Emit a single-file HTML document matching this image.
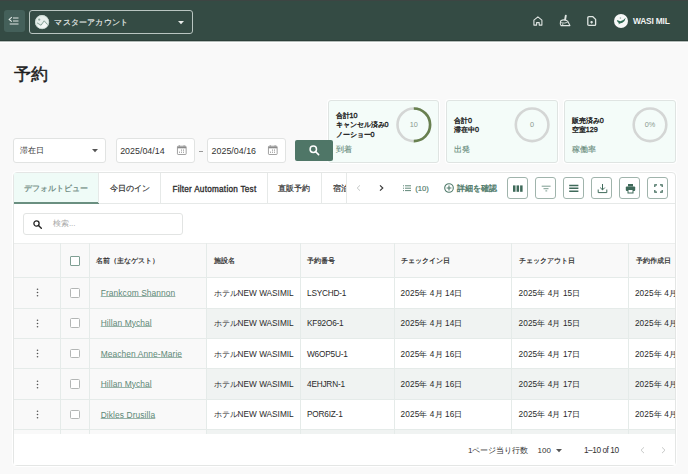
<!DOCTYPE html><html lang="ja"><head><meta charset="utf-8"><style>
*{box-sizing:border-box;margin:0;padding:0}
html,body{width:688px;height:474px;overflow:hidden}
body{background:#f9f9f9;font-family:"Liberation Sans",sans-serif;color:#222;position:relative}
.a{position:absolute;white-space:nowrap}
svg{position:absolute;overflow:visible}
</style></head><body>
<div class="a" style="left:0;top:0;width:688px;height:41px;background:#344b44"></div>
<div class="a" style="left:0;top:0;width:688px;height:1px;background:#3d4543"></div>
<div class="a" style="left:0;top:40px;width:688px;height:1px;background:#2c3f39"></div>
<div class="a" style="left:0;top:41px;width:688px;height:1px;background:#b4bcb9"></div>
<div class="a" style="left:0;top:42px;width:688px;height:1px;background:#ffffff"></div>
<div class="a" style="left:3.5px;top:10px;width:21.3px;height:21.8px;border-radius:3px;background:#44605a"></div>
<svg style="left:8px;top:15px" width="12" height="11" viewBox="0 0 12 11"><path d="M3.8 2.1 L1.2 4.4 L3.8 6.7" fill="none" stroke="#e4eae7" stroke-width="1.1"/><path d="M5 3H10.5 M5 6H10.5 M1.7 9H10.5" stroke="#dfe6e3" stroke-width="1.2"/></svg>
<div class="a" style="left:29px;top:10px;width:164px;height:24px;border:1px solid #b9c5c1;border-radius:3px"></div>
<div class="a" style="left:34.5px;top:14.7px;width:14.3px;height:14.3px;border-radius:50%;background:#e6eeeb"></div>
<svg style="left:34.5px;top:14.7px" width="14.3" height="14.3" viewBox="0 0 14.3 14.3"><circle cx="7.15" cy="7.15" r="6.6" fill="none" stroke="#c3d4cd" stroke-width="0.8"/><circle cx="4.2" cy="4.6" r="1.1" fill="#8fa99e"/><path d="M2 7.8 L6 10.2 L9.2 5.8 L12.6 9.6" fill="none" stroke="#7d9a8f" stroke-width="0.9"/><path d="M2.5 9.8 L6 11.8 L9.2 7.6 L12 10.5 L11 12.5 H3.5Z" fill="#f4f7f6"/></svg>
<div class="a" style="left:54.4px;top:16px;font-size:8px;letter-spacing:0.2px;line-height:14px;color:#eaeeec;-webkit-text-stroke:0.15px #eaeeec">マスターアカウント</div>
<svg style="left:178.3px;top:20.5px" width="6" height="4" viewBox="0 0 6 4"><path d="M0 0H6L3 3.2Z" fill="#e8ecea"/></svg>
<svg style="left:532.6px;top:15.5px" width="10" height="10" viewBox="0 0 10 10"><path d="M0.9 4.2 L4.9 0.9 L8.9 4.2 V9.1 H6.2 V6.6 H3.6 V9.1 H0.9 Z" fill="none" stroke="#dfe5e2" stroke-width="1.1" stroke-linejoin="round"/></svg>
<svg style="left:559px;top:14px" width="13" height="13" viewBox="0 0 13 13"><path d="M6.8 1.6 L6.1 5.6" stroke="#dfe5e2" stroke-width="1.9" stroke-linecap="round"/><path d="M1.6 7 C1.1 8.8 1.3 10.5 2.1 11.6 H10.9 L8.6 7.1 C6.6 5.9 3.3 5.8 1.6 7 Z" fill="none" stroke="#dfe5e2" stroke-width="1.1" stroke-linejoin="round"/><path d="M2.2 8.6 C4.5 9.4 6.5 9.2 8.8 8 M3.3 9.5 L4.2 11.5" fill="none" stroke="#dfe5e2" stroke-width="0.9"/></svg>
<svg style="left:587px;top:15.8px" width="10" height="10" viewBox="0 0 10 10"><path d="M0.8 1.8 Q0.8 0.7 1.9 0.7 H5.9 L8.6 3.4 V8.4 Q8.6 9.3 7.7 9.3 H1.9 Q0.8 9.3 0.8 8.4 Z" fill="none" stroke="#dfe5e2" stroke-width="1.3" stroke-linejoin="round"/><path d="M4.6 4.9 V7.5 M3.3 6.2 H5.9" stroke="#dfe5e2" stroke-width="1.2"/></svg>
<div class="a" style="left:613.9px;top:13.7px;width:14.2px;height:14.2px;border-radius:50%;background:#f7f8f8"></div>
<svg style="left:613.9px;top:13.7px" width="14.2" height="14.2" viewBox="0 0 14.2 14.2"><path d="M2.8 5.9 L6.4 7.2 Q9.5 6.6 11.7 3.7 Q11.1 7.3 8.4 8.8 L5.8 9.4 L4.7 10.6 L4.8 8.9 Q3.2 7.9 2.8 5.9Z" fill="#2f6b55"/><circle cx="6.4" cy="4.1" r="0.8" fill="#9db3aa"/></svg>
<div class="a" style="left:633px;top:15px;font-size:8.4px;letter-spacing:-0.2px;line-height:12px;font-weight:bold;color:#f2f4f3">WASI MIL</div>
<div class="a" style="left:13.5px;top:63px;font-size:17px;line-height:24px;color:#1e1e1e;-webkit-text-stroke:0.5px #1e1e1e">予約</div>
<div class="a" style="left:13px;top:137.8px;width:93.4px;height:25.099999999999994px;background:#fff;border:1px solid #e1e3e2;border-radius:3px;"></div>
<div class="a" style="left:19.7px;top:144px;font-size:8px;line-height:13px;color:#333">滞在日</div>
<svg style="left:92px;top:148.5px" width="6" height="4" viewBox="0 0 6 4"><path d="M0 0H6L3 3.2Z" fill="#555"/></svg>
<div class="a" style="left:115.5px;top:138px;width:79.30000000000001px;height:24.599999999999994px;background:#fff;border:1px solid #e1e3e2;border-radius:3px;"></div>
<div class="a" style="left:120.2px;top:144.5px;font-size:8.9px;line-height:13px;color:#333">2025/04/14</div>
<svg style="left:177px;top:145.3px" width="10" height="10" viewBox="0 0 10 10"><rect x="0.45" y="1.2" width="8.7" height="8.3" rx="0.7" fill="none" stroke="#8a8a8a" stroke-width="0.8"/><path d="M0.5 2.5H9.1" stroke="#8a8a8a" stroke-width="1.6"/><path d="M2.3 0.2V1.6 M7.1 0.2V1.6" stroke="#8a8a8a" stroke-width="0.8"/><g fill="#8a8a8a"><rect x="4" y="4.6" width="1" height="1"/><rect x="6" y="4.6" width="1" height="1"/><rect x="2" y="6.7" width="1" height="1"/><rect x="4" y="6.7" width="1" height="1"/><rect x="6" y="6.7" width="1" height="1"/></g></svg>
<div class="a" style="left:198.7px;top:150.5px;width:4.5px;height:1px;background:#999"></div>
<div class="a" style="left:206.5px;top:138px;width:79.39999999999998px;height:24.599999999999994px;background:#fff;border:1px solid #e1e3e2;border-radius:3px;"></div>
<div class="a" style="left:211.6px;top:144.5px;font-size:8.9px;line-height:13px;color:#333">2025/04/16</div>
<svg style="left:268.3px;top:145.3px" width="10" height="10" viewBox="0 0 10 10"><rect x="0.45" y="1.2" width="8.7" height="8.3" rx="0.7" fill="none" stroke="#8a8a8a" stroke-width="0.8"/><path d="M0.5 2.5H9.1" stroke="#8a8a8a" stroke-width="1.6"/><path d="M2.3 0.2V1.6 M7.1 0.2V1.6" stroke="#8a8a8a" stroke-width="0.8"/><g fill="#8a8a8a"><rect x="4" y="4.6" width="1" height="1"/><rect x="6" y="4.6" width="1" height="1"/><rect x="2" y="6.7" width="1" height="1"/><rect x="4" y="6.7" width="1" height="1"/><rect x="6" y="6.7" width="1" height="1"/></g></svg>
<div class="a" style="left:327.8px;top:100px;width:111.2px;height:62.6px;background:#f4fcf9;border:1px solid #dfe4e2;border-radius:3px;box-shadow:0 0 1px 1px #fff"></div>
<div class="a" style="left:335.6px;top:110.9px;font-size:7.2px;line-height:9.4px;color:#1f1f1f;-webkit-text-stroke:0.35px #1f1f1f">合計10<br>キャンセル済み0<br>ノーショー0</div>
<div class="a" style="left:335.6px;top:142.5px;font-size:8.2px;line-height:14px;color:#6c8f81;-webkit-text-stroke:0.15px #6c8f81">到着</div>
<svg style="left:0;top:0" width="688" height="474"><circle cx="413.8" cy="124.8" r="16.3" fill="none" stroke="#d4d6d5" stroke-width="2.6"/><path d="M413.8 108.5 A16.3 16.3 0 0 1 413.8 141.1" fill="none" stroke="#68804f" stroke-width="2.6"/></svg>
<div class="a" style="left:398.8px;top:118.8px;width:30px;text-align:center;font-size:7.3px;line-height:12px;color:#8a9a90">10</div>
<div class="a" style="left:446.1px;top:100px;width:111.8px;height:62.6px;background:#f4fcf9;border:1px solid #dfe4e2;border-radius:3px;box-shadow:0 0 1px 1px #fff"></div>
<div class="a" style="left:453.90000000000003px;top:115.6px;font-size:7.2px;line-height:9.4px;color:#1f1f1f;-webkit-text-stroke:0.35px #1f1f1f">合計0<br>滞在中0</div>
<div class="a" style="left:453.90000000000003px;top:142.5px;font-size:8.2px;line-height:14px;color:#6c8f81;-webkit-text-stroke:0.15px #6c8f81">出発</div>
<svg style="left:0;top:0" width="688" height="474"><circle cx="532.1" cy="124.8" r="16.3" fill="none" stroke="#d4d6d5" stroke-width="2.6"/></svg>
<div class="a" style="left:517.1px;top:118.8px;width:30px;text-align:center;font-size:7.3px;line-height:12px;color:#8a9a90">0</div>
<div class="a" style="left:564.0px;top:100px;width:112px;height:62.6px;background:#f4fcf9;border:1px solid #dfe4e2;border-radius:3px;box-shadow:0 0 1px 1px #fff"></div>
<div class="a" style="left:571.8px;top:115.6px;font-size:7.2px;line-height:9.4px;color:#1f1f1f;-webkit-text-stroke:0.35px #1f1f1f">販売済み0<br>空室129</div>
<div class="a" style="left:571.8px;top:142.5px;font-size:8.2px;line-height:14px;color:#6c8f81;-webkit-text-stroke:0.15px #6c8f81">稼働率</div>
<svg style="left:0;top:0" width="688" height="474"><circle cx="650.0" cy="124.8" r="16.3" fill="none" stroke="#d4d6d5" stroke-width="2.6"/></svg>
<div class="a" style="left:635.0px;top:118.8px;width:30px;text-align:center;font-size:7.3px;line-height:12px;color:#8a9a90">0%</div>
<div class="a" style="left:295.3px;top:140px;width:37.3px;height:20.7px;background:#4f7667;border-radius:2px"></div>
<svg style="left:309px;top:145px" width="11" height="11" viewBox="0 0 11 11"><circle cx="4.3" cy="4.3" r="3.2" fill="none" stroke="#fff" stroke-width="1.5"/><path d="M6.7 6.7 L9.6 9.6" stroke="#fff" stroke-width="1.6" stroke-linecap="round"/></svg>
<div class="a" style="left:13px;top:172px;width:663px;height:294.4px;background:#fff;border:1px solid #e4e6e5;border-radius:4px;box-shadow:0 0 1px 1px #fff"></div>
<div class="a" style="left:14px;top:173px;width:84.8px;height:29px;background:#effbf7"></div>
<div class="a" style="left:14px;top:202px;width:84.8px;height:2px;background:#6a8f80"></div>
<div class="a" style="left:98.8px;top:203px;width:576.2px;height:1px;background:#e6e9e8"></div>
<div class="a" style="left:98.3px;top:173px;width:1px;height:30px;background:#e6e9e8"></div>
<div class="a" style="left:160.1px;top:173px;width:1px;height:30px;background:#e6e9e8"></div>
<div class="a" style="left:266.5px;top:173px;width:1px;height:30px;background:#e6e9e8"></div>
<div class="a" style="left:320.5px;top:173px;width:1px;height:30px;background:#e6e9e8"></div>
<div class="a" style="left:345.8px;top:173px;width:1px;height:30px;background:#e6e9e8"></div>
<div class="a" style="left:13.6px;top:181.7px;width:85.2px;text-align:center;font-size:8px;line-height:14px;color:#6b877c;-webkit-text-stroke:0.2px #6b877c">デフォルトビュー</div>
<div class="a" style="left:98.8px;top:181.7px;width:61.8px;text-align:center;font-size:8px;line-height:14px;color:#333;-webkit-text-stroke:0.2px #333">今日のイン</div>
<div class="a" style="left:172.4px;top:182.5px;font-size:8.2px;letter-spacing:0.25px;line-height:14px;color:#2a2a2a;-webkit-text-stroke:0.3px #2a2a2a">Filter Automation Test</div>
<div class="a" style="left:267px;top:181.7px;width:54px;text-align:center;font-size:8px;line-height:14px;color:#333;-webkit-text-stroke:0.2px #333">直販予約</div>
<div class="a" style="left:321px;top:181px;width:25px;overflow:hidden"><div style="padding-left:12px;padding-top:0.7px;font-size:8px;line-height:14px;color:#333;-webkit-text-stroke:0.2px #333">宿泊</div></div>
<svg style="left:355.5px;top:184.9px" width="5" height="6" viewBox="0 0 5 6"><path d="M4 0.3 L1.2 3 L4 5.7" fill="none" stroke="#c5c8c7" stroke-width="1"/></svg>
<svg style="left:379.3px;top:184.9px" width="5" height="6" viewBox="0 0 5 6"><path d="M1 0.3 L3.8 3 L1 5.7" fill="none" stroke="#3a3a3a" stroke-width="1.15"/></svg>
<svg style="left:402.8px;top:184.8px" width="9" height="7" viewBox="0 0 9 7"><path d="M0 0.8h1 M0 3.2h1 M0 5.6h1 M2 0.8H8 M2 3.2H8 M2 5.6H8" stroke="#4f7a6a" stroke-width="0.9"/></svg>
<div class="a" style="left:415.2px;top:181.5px;font-size:7.7px;line-height:14px;color:#4f7a6a;-webkit-text-stroke:0.15px #4f7a6a">(10)</div>
<svg style="left:443.5px;top:183px" width="10" height="10" viewBox="0 0 10 10"><circle cx="5" cy="5" r="4.3" fill="none" stroke="#4f7a6a" stroke-width="1.1"/><path d="M5 2.6V7.4 M2.6 5H7.4" stroke="#4f7a6a" stroke-width="1.1"/></svg>
<div class="a" style="left:457px;top:181.5px;font-size:8.2px;line-height:14px;color:#4f7a6a;-webkit-text-stroke:0.35px #4f7a6a">詳細を確認</div>
<div class="a" style="left:507.3px;top:177px;width:21px;height:21.6px;border:1px solid #a0b4ac;border-radius:3px;background:#fff"></div>
<div class="a" style="left:535.3px;top:177px;width:21px;height:21.6px;border:1px solid #a0b4ac;border-radius:3px;background:#fff"></div>
<div class="a" style="left:563.3px;top:177px;width:21px;height:21.6px;border:1px solid #a0b4ac;border-radius:3px;background:#fff"></div>
<div class="a" style="left:591.3px;top:177px;width:21px;height:21.6px;border:1px solid #a0b4ac;border-radius:3px;background:#fff"></div>
<div class="a" style="left:619.3px;top:177px;width:21px;height:21.6px;border:1px solid #a0b4ac;border-radius:3px;background:#fff"></div>
<div class="a" style="left:647.1px;top:177px;width:21px;height:21.6px;border:1px solid #a0b4ac;border-radius:3px;background:#fff"></div>
<svg style="left:512.5px;top:183.5px" width="11" height="9" viewBox="0 0 11 9"><rect x="0" y="1.4" width="2.5" height="6.4" fill="#3f6a5a"/><rect x="3.55" y="1.4" width="2.5" height="6.4" fill="#3f6a5a"/><rect x="7.1" y="1.4" width="2.5" height="6.4" fill="#3f6a5a"/></svg>
<svg style="left:540.5px;top:183.5px" width="11" height="9" viewBox="0 0 11 9"><path d="M0.7 2.2H9.6 M2.5 4.7H7.5 M4.4 6.9H6.2" stroke="#5a8373" stroke-width="0.8"/></svg>
<svg style="left:568.5px;top:182.5px" width="11" height="11" viewBox="0 0 11 11"><path d="M0.2 2.5H9.4 M0.2 5.3H9.4 M0.2 8.2H9.4" stroke="#3f6a5a" stroke-width="1.4"/></svg>
<svg style="left:596.5px;top:182.5px" width="11" height="11" viewBox="0 0 11 11"><path d="M5.5 1V6.8 M3.2 4.6 L5.5 6.9 L7.8 4.6" fill="none" stroke="#3f6a5a" stroke-width="1"/><path d="M1.2 6.5V9.6H9.8V6.5" fill="none" stroke="#3f6a5a" stroke-width="1"/></svg>
<svg style="left:624.5px;top:182.5px" width="11" height="11" viewBox="0 0 11 11"><rect x="3" y="1" width="5" height="2.5" fill="#3f6a5a"/><rect x="0.8" y="3.5" width="9.4" height="4.5" rx="1" fill="#3f6a5a"/><rect x="3" y="6.5" width="5" height="3.5" fill="#fff" stroke="#3f6a5a" stroke-width="1"/></svg>
<svg style="left:653.5px;top:183.5px" width="9" height="9" viewBox="0 0 9 9"><path d="M0.8 3V0.8H3 M6 0.8H8.2V3 M8.2 6V8.2H6 M3 8.2H0.8V6" fill="none" stroke="#3f6a5a" stroke-width="1.2"/></svg>
<div class="a" style="left:23.2px;top:213.2px;width:159.6px;height:21.6px;background:#fff;border:1px solid #e2e4e3;border-radius:3px"></div>
<svg style="left:32.8px;top:219.8px" width="9" height="9" viewBox="0 0 9 9"><circle cx="3.5" cy="3.5" r="2.6" fill="none" stroke="#222" stroke-width="1.3"/><path d="M5.5 5.5L8.3 8.3" stroke="#222" stroke-width="1.4" stroke-linecap="round"/></svg>
<div class="a" style="left:52.9px;top:217px;font-size:8px;line-height:14px;color:#a5a5a5">検索...</div>
<div class="a" style="left:14px;top:243.3px;width:661px;height:34.30000000000001px;background:#f9f9f9"></div>
<div class="a" style="left:14px;top:242.8px;width:661px;height:1px;background:#eceeed"></div>
<div class="a" style="left:14px;top:277.6px;width:192.7px;height:30.399999999999977px;background:#f9f9f9"></div>
<div class="a" style="left:206.7px;top:277.6px;width:468.3px;height:30.399999999999977px;background:#fff"></div>
<div class="a" style="left:14px;top:277.1px;width:661px;height:1px;background:#e5ebe9"></div>
<div class="a" style="left:14px;top:308.0px;width:192.7px;height:30.400000000000034px;background:#f9f9f9"></div>
<div class="a" style="left:206.7px;top:308.0px;width:468.3px;height:30.400000000000034px;background:#f0f3f2"></div>
<div class="a" style="left:14px;top:307.5px;width:661px;height:1px;background:#e5ebe9"></div>
<div class="a" style="left:14px;top:338.40000000000003px;width:192.7px;height:30.399999999999977px;background:#f9f9f9"></div>
<div class="a" style="left:206.7px;top:338.40000000000003px;width:468.3px;height:30.399999999999977px;background:#fff"></div>
<div class="a" style="left:14px;top:337.90000000000003px;width:661px;height:1px;background:#e5ebe9"></div>
<div class="a" style="left:14px;top:368.8px;width:192.7px;height:30.400000000000034px;background:#f9f9f9"></div>
<div class="a" style="left:206.7px;top:368.8px;width:468.3px;height:30.400000000000034px;background:#f0f3f2"></div>
<div class="a" style="left:14px;top:368.3px;width:661px;height:1px;background:#e5ebe9"></div>
<div class="a" style="left:14px;top:399.20000000000005px;width:192.7px;height:30.399999999999977px;background:#f9f9f9"></div>
<div class="a" style="left:206.7px;top:399.20000000000005px;width:468.3px;height:30.399999999999977px;background:#fff"></div>
<div class="a" style="left:14px;top:398.70000000000005px;width:661px;height:1px;background:#e5ebe9"></div>
<div class="a" style="left:14px;top:429.6px;width:192.7px;height:4.7999999999999545px;background:#f9f9f9"></div>
<div class="a" style="left:206.7px;top:429.6px;width:468.3px;height:4.7999999999999545px;background:#f0f3f2"></div>
<div class="a" style="left:14px;top:429.1px;width:661px;height:1px;background:#e5ebe9"></div>
<div class="a" style="left:60.3px;top:243.3px;width:1px;height:191.09999999999997px;background:#e5ebe9"></div>
<div class="a" style="left:89.4px;top:243.3px;width:1px;height:191.09999999999997px;background:#e5ebe9"></div>
<div class="a" style="left:206.2px;top:243.3px;width:1px;height:191.09999999999997px;background:#e5ebe9"></div>
<div class="a" style="left:300.1px;top:243.3px;width:1px;height:191.09999999999997px;background:#e5ebe9"></div>
<div class="a" style="left:394.2px;top:243.3px;width:1px;height:191.09999999999997px;background:#e5ebe9"></div>
<div class="a" style="left:511.0px;top:243.3px;width:1px;height:191.09999999999997px;background:#e5ebe9"></div>
<div class="a" style="left:628.1px;top:243.3px;width:1px;height:191.09999999999997px;background:#e5ebe9"></div>
<div class="a" style="left:70.4px;top:256px;width:9.8px;height:9.8px;border:1px solid #7f9f93;border-radius:1px;background:#fff"></div>
<div class="a" style="left:96.4px;top:254.3px;font-size:7.3px;line-height:13px;color:#2a2a2a;-webkit-text-stroke:0.2px #2a2a2a">名前（主なゲスト）</div>
<div class="a" style="left:213.6px;top:254.3px;font-size:7.3px;line-height:13px;color:#2a2a2a;-webkit-text-stroke:0.2px #2a2a2a">施設名</div>
<div class="a" style="left:307.4px;top:254.3px;font-size:7.3px;line-height:13px;color:#2a2a2a;-webkit-text-stroke:0.2px #2a2a2a">予約番号</div>
<div class="a" style="left:400.7px;top:254.3px;font-size:7.3px;line-height:13px;color:#2a2a2a;-webkit-text-stroke:0.2px #2a2a2a">チェックイン日</div>
<div class="a" style="left:518.6px;top:254.3px;font-size:7.3px;line-height:13px;color:#2a2a2a;-webkit-text-stroke:0.2px #2a2a2a">チェックアウト日</div>
<div class="a" style="left:635.8px;top:254.3px;font-size:7.3px;line-height:13px;color:#2a2a2a;-webkit-text-stroke:0.2px #2a2a2a">予約作成日</div>
<svg style="left:35.5px;top:288.3px" width="3" height="9" viewBox="0 0 3 9"><circle cx="1.5" cy="1.3" r="0.8" fill="#555"/><circle cx="1.5" cy="4.5" r="0.8" fill="#555"/><circle cx="1.5" cy="7.7" r="0.8" fill="#555"/></svg>
<div class="a" style="left:70.4px;top:287.90000000000003px;width:9.8px;height:9.8px;border:1px solid #b3b6b5;border-radius:1.5px;background:#fff"></div>
<div class="a" style="left:100.7px;top:287.0px;font-size:8.4px;letter-spacing:0.1px;line-height:13px;color:#5d8877;text-decoration:underline;text-decoration-color:#98b4a9;text-underline-offset:0.4px">Frankcom Shannon</div>
<div class="a" style="left:213.6px;top:286.7px;font-size:8.25px;line-height:13px;color:#2a2a2a">ホテルNEW WASIMIL</div>
<div class="a" style="left:307px;top:286.7px;font-size:8.25px;letter-spacing:-0.2px;line-height:13px;color:#2a2a2a">LSYCHD-1</div>
<div class="a" style="left:400.6px;top:286.7px;font-size:8.25px;letter-spacing:0.1px;line-height:13px;color:#2a2a2a">2025年 4月 14日</div>
<div class="a" style="left:518.5px;top:286.7px;font-size:8.25px;letter-spacing:0.1px;line-height:13px;color:#2a2a2a">2025年 4月 15日</div>
<div class="a" style="left:634.9px;top:286.7px;width:40.10000000000002px;overflow:hidden;font-size:8.25px;letter-spacing:0.1px;line-height:13px;color:#2a2a2a">2025年 4月 14日</div>
<svg style="left:35.5px;top:318.7px" width="3" height="9" viewBox="0 0 3 9"><circle cx="1.5" cy="1.3" r="0.8" fill="#555"/><circle cx="1.5" cy="4.5" r="0.8" fill="#555"/><circle cx="1.5" cy="7.7" r="0.8" fill="#555"/></svg>
<div class="a" style="left:70.4px;top:318.3px;width:9.8px;height:9.8px;border:1px solid #b3b6b5;border-radius:1.5px;background:#fff"></div>
<div class="a" style="left:100.7px;top:317.4px;font-size:8.4px;letter-spacing:0.1px;line-height:13px;color:#5d8877;text-decoration:underline;text-decoration-color:#98b4a9;text-underline-offset:0.4px">Hillan Mychal</div>
<div class="a" style="left:213.6px;top:317.09999999999997px;font-size:8.25px;line-height:13px;color:#2a2a2a">ホテルNEW WASIMIL</div>
<div class="a" style="left:307px;top:317.09999999999997px;font-size:8.25px;letter-spacing:-0.2px;line-height:13px;color:#2a2a2a">KF92O6-1</div>
<div class="a" style="left:400.6px;top:317.09999999999997px;font-size:8.25px;letter-spacing:0.1px;line-height:13px;color:#2a2a2a">2025年 4月 14日</div>
<div class="a" style="left:518.5px;top:317.09999999999997px;font-size:8.25px;letter-spacing:0.1px;line-height:13px;color:#2a2a2a">2025年 4月 15日</div>
<div class="a" style="left:634.9px;top:317.09999999999997px;width:40.10000000000002px;overflow:hidden;font-size:8.25px;letter-spacing:0.1px;line-height:13px;color:#2a2a2a">2025年 4月 14日</div>
<svg style="left:35.5px;top:349.1px" width="3" height="9" viewBox="0 0 3 9"><circle cx="1.5" cy="1.3" r="0.8" fill="#555"/><circle cx="1.5" cy="4.5" r="0.8" fill="#555"/><circle cx="1.5" cy="7.7" r="0.8" fill="#555"/></svg>
<div class="a" style="left:70.4px;top:348.70000000000005px;width:9.8px;height:9.8px;border:1px solid #b3b6b5;border-radius:1.5px;background:#fff"></div>
<div class="a" style="left:100.7px;top:347.8px;font-size:8.4px;letter-spacing:0.1px;line-height:13px;color:#5d8877;text-decoration:underline;text-decoration-color:#98b4a9;text-underline-offset:0.4px">Meachen Anne-Marie</div>
<div class="a" style="left:213.6px;top:347.5px;font-size:8.25px;line-height:13px;color:#2a2a2a">ホテルNEW WASIMIL</div>
<div class="a" style="left:307px;top:347.5px;font-size:8.25px;letter-spacing:-0.2px;line-height:13px;color:#2a2a2a">W6OP5U-1</div>
<div class="a" style="left:400.6px;top:347.5px;font-size:8.25px;letter-spacing:0.1px;line-height:13px;color:#2a2a2a">2025年 4月 16日</div>
<div class="a" style="left:518.5px;top:347.5px;font-size:8.25px;letter-spacing:0.1px;line-height:13px;color:#2a2a2a">2025年 4月 17日</div>
<div class="a" style="left:634.9px;top:347.5px;width:40.10000000000002px;overflow:hidden;font-size:8.25px;letter-spacing:0.1px;line-height:13px;color:#2a2a2a">2025年 4月 14日</div>
<svg style="left:35.5px;top:379.5px" width="3" height="9" viewBox="0 0 3 9"><circle cx="1.5" cy="1.3" r="0.8" fill="#555"/><circle cx="1.5" cy="4.5" r="0.8" fill="#555"/><circle cx="1.5" cy="7.7" r="0.8" fill="#555"/></svg>
<div class="a" style="left:70.4px;top:379.1px;width:9.8px;height:9.8px;border:1px solid #b3b6b5;border-radius:1.5px;background:#fff"></div>
<div class="a" style="left:100.7px;top:378.2px;font-size:8.4px;letter-spacing:0.1px;line-height:13px;color:#5d8877;text-decoration:underline;text-decoration-color:#98b4a9;text-underline-offset:0.4px">Hillan Mychal</div>
<div class="a" style="left:213.6px;top:377.9px;font-size:8.25px;line-height:13px;color:#2a2a2a">ホテルNEW WASIMIL</div>
<div class="a" style="left:307px;top:377.9px;font-size:8.25px;letter-spacing:-0.2px;line-height:13px;color:#2a2a2a">4EHJRN-1</div>
<div class="a" style="left:400.6px;top:377.9px;font-size:8.25px;letter-spacing:0.1px;line-height:13px;color:#2a2a2a">2025年 4月 16日</div>
<div class="a" style="left:518.5px;top:377.9px;font-size:8.25px;letter-spacing:0.1px;line-height:13px;color:#2a2a2a">2025年 4月 17日</div>
<div class="a" style="left:634.9px;top:377.9px;width:40.10000000000002px;overflow:hidden;font-size:8.25px;letter-spacing:0.1px;line-height:13px;color:#2a2a2a">2025年 4月 14日</div>
<svg style="left:35.5px;top:409.90000000000003px" width="3" height="9" viewBox="0 0 3 9"><circle cx="1.5" cy="1.3" r="0.8" fill="#555"/><circle cx="1.5" cy="4.5" r="0.8" fill="#555"/><circle cx="1.5" cy="7.7" r="0.8" fill="#555"/></svg>
<div class="a" style="left:70.4px;top:409.50000000000006px;width:9.8px;height:9.8px;border:1px solid #b3b6b5;border-radius:1.5px;background:#fff"></div>
<div class="a" style="left:100.7px;top:408.6px;font-size:8.4px;letter-spacing:0.1px;line-height:13px;color:#5d8877;text-decoration:underline;text-decoration-color:#98b4a9;text-underline-offset:0.4px">Dikles Drusilla</div>
<div class="a" style="left:213.6px;top:408.3px;font-size:8.25px;line-height:13px;color:#2a2a2a">ホテルNEW WASIMIL</div>
<div class="a" style="left:307px;top:408.3px;font-size:8.25px;letter-spacing:-0.2px;line-height:13px;color:#2a2a2a">POR6IZ-1</div>
<div class="a" style="left:400.6px;top:408.3px;font-size:8.25px;letter-spacing:0.1px;line-height:13px;color:#2a2a2a">2025年 4月 16日</div>
<div class="a" style="left:518.5px;top:408.3px;font-size:8.25px;letter-spacing:0.1px;line-height:13px;color:#2a2a2a">2025年 4月 17日</div>
<div class="a" style="left:634.9px;top:408.3px;width:40.10000000000002px;overflow:hidden;font-size:8.25px;letter-spacing:0.1px;line-height:13px;color:#2a2a2a">2025年 4月 14日</div>
<div class="a" style="left:14px;top:434.4px;width:661px;height:31.0px;background:#fff"></div>
<div class="a" style="left:468px;top:444px;font-size:8px;line-height:13px;color:#333">1ページ当り行数</div>
<div class="a" style="left:537.5px;top:444px;font-size:8px;line-height:13px;color:#333">100</div>
<svg style="left:555.5px;top:449px" width="6" height="4" viewBox="0 0 6 4"><path d="M0 0H6L3 3.2Z" fill="#555"/></svg>
<div class="a" style="left:583.9px;top:443.7px;font-size:8.3px;letter-spacing:-0.45px;line-height:13px;color:#333">1–10 of 10</div>
<svg style="left:639.5px;top:447.4px" width="5" height="7" viewBox="0 0 5 7"><path d="M4 0.3 L1 3.2 L4 6.1" fill="none" stroke="#c8cac9" stroke-width="1"/></svg>
<svg style="left:660.5px;top:447.4px" width="5" height="7" viewBox="0 0 5 7"><path d="M1 0.3 L4 3.2 L1 6.1" fill="none" stroke="#c8cac9" stroke-width="1"/></svg>
</body></html>
